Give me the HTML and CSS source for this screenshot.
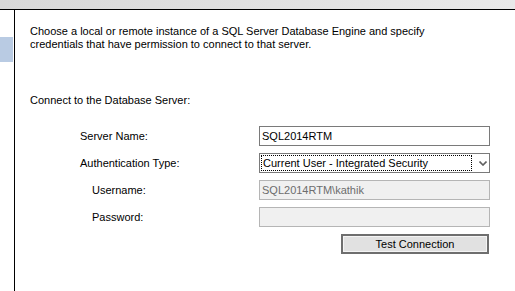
FILE: index.html
```html
<!DOCTYPE html>
<html>
<head>
<meta charset="utf-8">
<link rel="stylesheet" href="styles.css">
</head>
<body>
<div class="window">
  <div class="titlebar"></div>
  <div class="main">
    <aside class="nav"><div class="nav-sel"></div></aside>
    <section class="content">
      <p class="intro">Choose a local or remote instance of a SQL Server Database Engine and specify<br>credentials that have permission to connect to that server.</p>
      <p class="heading">Connect to the Database Server:</p>
      <div class="form">
        <label class="lbl">Server Name:</label>
        <div class="field">SQL2014RTM</div>
        <label class="lbl">Authentication Type:</label>
        <div class="field select">
          <span class="focus">Current User - Integrated Security</span>
          <svg class="chev" width="8" height="5" viewBox="0 0 8 5"><path d="M0.5 0.5 L4 4 L7.5 0.5" fill="none" stroke="#606060" stroke-width="1.6"/></svg>
        </div>
        <label class="lbl sub">Username:</label>
        <div class="field disabled">SQL2014RTM\kathik</div>
        <label class="lbl sub">Password:</label>
        <div class="field disabled"></div>
        <div class="btn-cell"><button class="btn">Test Connection</button></div>
      </div>
    </section>
  </div>
</div>
</body>
</html>
```
FILE: styles.css
```css
html, body {
  margin: 0;
  padding: 0;
  background: #fff;
}
.window {
  width: 515px;
  height: 291px;
  display: flex;
  flex-direction: column;
  font-family: "Liberation Sans", Arial, sans-serif;
  font-size: 11px;
  line-height: 13px;
  color: #000;
  overflow: hidden;
}
.titlebar {
  height: 9px;
  background: linear-gradient(to right, #d8d8d8, #e9e9e9);
  border-bottom: 1px solid #000;
}
.main {
  flex: 1;
  display: flex;
}
.nav {
  width: 14px;
  border-right: 1px solid #000;
  padding-top: 27px;
}
.nav-sel {
  width: 13px;
  height: 25px;
  background: #b9cbe3;
}
.content {
  flex: 1;
  padding: 15px 0 0 15px;
}
.intro {
  margin: 0;
}
.heading {
  margin: 43px 0 0;
}
.form {
  margin: 19px 0 0 50px;
  display: grid;
  grid-template-columns: 179px 231px;
  grid-auto-rows: 20px;
  row-gap: 7px;
  align-items: center;
}
.lbl {
  display: block;
}
.lbl.sub {
  padding-left: 12px;
}
.field {
  box-sizing: border-box;
  height: 20px;
  border: 1px solid #7a7a7a;
  background: #fff;
  padding: 3px 0 0 2px;
  white-space: nowrap;
}
.field.disabled {
  background: #f0f0f0;
  border-color: #b5b5b5;
  color: #6d6d6d;
}
.select {
  display: flex;
  align-items: center;
  padding: 1px 0 1px 1px;
}
.focus {
  box-sizing: border-box;
  height: 16px;
  width: 211px;
  border: 1px dotted #000;
  padding: 1px 0 0 1px;
}
.chev {
  margin-left: 7px;
}
.btn-cell {
  grid-column: 2;
  display: flex;
  justify-content: flex-end;
  padding-right: 1px;
}
.btn {
  box-sizing: border-box;
  width: 148px;
  height: 20px;
  border: 2px solid #6e6e6e;
  box-shadow: inset 0 0 0 1px #f4f4f4;
  background: #e1e1e1;
  font-family: "Liberation Sans", Arial, sans-serif;
  font-size: 11px;
  color: #000;
  padding: 0;
}
```
